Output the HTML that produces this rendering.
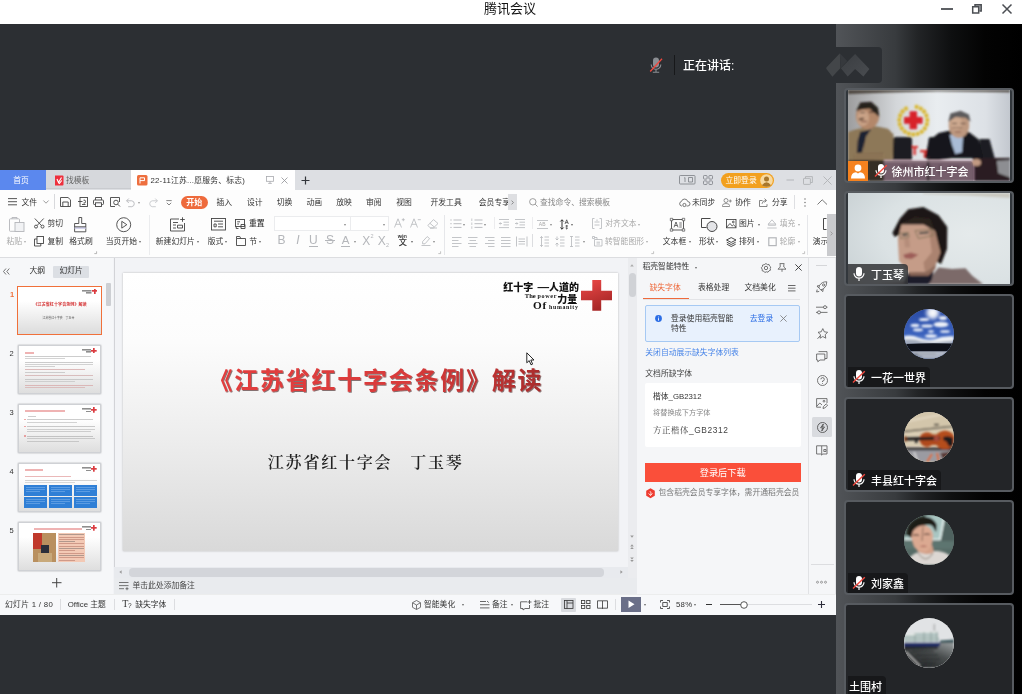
<!DOCTYPE html>
<html lang="zh-CN">
<head>
<meta charset="utf-8">
<title>腾讯会议</title>
<style>
*{box-sizing:border-box;margin:0;padding:0}
html,body{width:1022px;height:694px;overflow:hidden;background:#2c2f33}
body{position:relative;font-family:"Liberation Sans","Noto Sans CJK SC",sans-serif;color:#222;-webkit-font-smoothing:antialiased}
.abs{position:absolute}
#titlebar{will-change:transform;position:absolute;left:0;top:0;width:1022px;height:24px;background:#fff}
#titlebar .t{position:absolute;left:0;width:1022px;top:0;height:24px;line-height:18px;text-align:center;font-size:13px;color:#111;padding-right:2px}
#main{will-change:transform;position:absolute;left:0;top:24px;width:836px;height:670px;background:#2c2f33}
.tile{position:absolute;left:8px;width:170px;height:95px;border:2px solid #575b60;border-radius:4px;background:#232528;overflow:hidden}
.tile.vid{background:#32373c}
.tile .lbl{position:absolute;left:2px;bottom:0;height:20px;background:#17181a;border-radius:0 4px 0 0;color:#fff;font-size:11px;font-weight:500;line-height:22px;padding:0 4px 0 23px;white-space:nowrap}
.tile .av{position:absolute;left:58px;top:13px;width:50px;height:50px;border-radius:50%;overflow:hidden;background:#888}
.host{position:absolute;left:2px;bottom:0;width:20px;height:20px;background:#f5821f}
#side{will-change:transform;position:absolute;left:836px;top:24px;width:186px;height:670px;background:linear-gradient(90deg,#515458 0%,#383b3e 32%,#222426 44%,#0e0f10 62%,#030303 80%,#000 100%)}
#wps{will-change:transform;position:absolute;left:0;top:146px;width:836px;height:445px;background:#eef0f3;overflow:hidden;font-size:8px;color:#333}
.tx{position:absolute;white-space:nowrap;display:block}
.dd{position:absolute;width:0;height:0;border-left:1.7px solid transparent;border-right:1.7px solid transparent;border-top:2.2px solid #666;margin-left:-0.2px}
#wps svg{overflow:visible}
.thumb .tl{position:absolute;right:9px;top:3px;width:9.5px;height:4px;background:linear-gradient(#333,#333) 0 0/9.5px 1.6px no-repeat,linear-gradient(#333,#333) 4px 2.4px/5.5px 1.6px no-repeat}
.thumb .tc{position:absolute;right:3.5px;top:2px;width:5.4px;height:5.4px;background:linear-gradient(#d8262c,#d8262c) center/100% 1.7px no-repeat,linear-gradient(#d8262c,#d8262c) center/1.7px 100% no-repeat}
.thumb i{display:block;opacity:.42}
.thumb .tl{opacity:.55}
.thumb .tc{opacity:.9}
.thumb .tt{position:absolute;white-space:nowrap;line-height:5px;display:block}
.tile .ph{position:absolute;left:2px;top:0;display:block}
.tile svg{display:block}
</style>
</head>
<body>
<div id="titlebar"><div class="t">腾讯会议</div>
<svg class="abs" style="left:930px;top:0" width="92" height="24" viewBox="930 0 92 24" fill="none" stroke="#4b4e53" stroke-width="1.5">
<path d="M941 9H953" stroke-width="1.8"/><path d="M975 6.2V4.8H981.2V11H979.5" fill="#b5b7ba"/><path d="M972.7 6.8H978.7V13H972.7Z" fill="#fff"/><path d="M1002.5 4.5L1011.5 13.5M1011.5 4.5L1002.5 13.5"/></svg>
</div>
<div id="main">
<svg class="abs" style="left:648px;top:30px" width="16" height="20" viewBox="648 54 16 20">
<rect x="653" y="57.5" width="6" height="10" rx="3" fill="#8b8e93"/><path d="M651.2 64.5a4.8 4.8 0 0 0 9.6 0M656 69.5V72M652.8 72.2H659.2" fill="none" stroke="#8b8e93" stroke-width="1.1"/><path d="M650.2 71.5L662 58.8" stroke="#f0483e" stroke-width="1.3"/></svg>
<div class="abs" style="left:674px;top:31px;width:1px;height:20px;background:#17181a"></div>
<div class="abs" style="left:683px;top:33px;font-size:12px;line-height:18px;color:#fff;font-weight:500;white-space:nowrap">正在讲话:</div>

<div id="wps">
<div style="position:absolute;left:0px;top:0px;width:836px;height:20px;background:#dddfe3"></div>
<div style="position:absolute;left:0px;top:0px;width:46px;height:20px;background:#5b88ee"></div>
<span class="tx" style="left:1px;width:40px;text-align:center;top:5px;font-size:7.8px;line-height:12px;color:#fff;font-weight:400;">首页</span>
<div style="position:absolute;left:46px;top:0px;width:85px;height:19px;background:#d6d8dc;border-bottom:1px solid #c9cbcf"></div>
<svg style="position:absolute;left:54px;top:4.5px" width="10" height="11" viewBox="0 0 10 11" fill="none" stroke="#444" stroke-width="0.8" ><path d="M1 0.5H8.5Q9.5 0.5 9.5 1.5V9.5Q9.5 10.5 8.5 10.5H1Z" fill="#ee2f3c" stroke="none"/><path d="M3 4L4.5 7.5L7.5 2.5M5 8.8L7.8 5.5" stroke="#fff" stroke-width="1.1"/></svg>
<span class="tx" style="left:66px;top:5px;font-size:7.8px;line-height:12px;color:#666;font-weight:400;">找模板</span>
<div style="position:absolute;left:131px;top:0px;width:164px;height:20px;background:#fff"></div>
<svg style="position:absolute;left:137px;top:5px" width="10.5" height="10.5" viewBox="0 0 10.5 10.5" fill="none" stroke="#444" stroke-width="0.8" ><rect x="0" y="0" width="10.5" height="10.5" rx="1.5" fill="#ee6f3f" stroke="none"/><path d="M3 8.5V2.8H7.5V5.6H3" stroke="#fff" stroke-width="1"/></svg>
<span class="tx" style="left:150.5px;top:4.8px;font-size:7.8px;line-height:12px;color:#333;font-weight:400;letter-spacing:0.22px">22-11江苏...愿服务、标志)</span>
<svg style="position:absolute;left:266px;top:6px" width="8" height="8" viewBox="0 0 8 8" fill="none" stroke="#a8aaae" stroke-width="0.8" ><rect x="0.5" y="0.5" width="7" height="4.8" /><path d="M4 5.3V7.2M2.2 7.4H5.8"/></svg>
<svg style="position:absolute;left:280.5px;top:6.5px" width="7" height="7" viewBox="0 0 7 7" fill="none" stroke="#8f9196" stroke-width="0.8" ><path d="M0.5 0.5L6.5 6.5M6.5 0.5L0.5 6.5"/></svg>
<svg style="position:absolute;left:301px;top:5.5px" width="9" height="9" viewBox="0 0 9 9" fill="none" stroke="#33363b" stroke-width="1.2" ><path d="M4.5 0.5V8.5M0.5 4.5H8.5"/></svg>
<svg style="position:absolute;left:679px;top:5px" width="17" height="10" viewBox="0 0 17 10" fill="none" stroke="#7b7e84" stroke-width="0.8" ><rect x="0.5" y="0.5" width="15.5" height="8.5" rx="0.8"/><path d="M5.2 3L6 2.6V7M9.5 2.5H13.5V7H9.5Z"/></svg>
<svg style="position:absolute;left:703px;top:5px" width="10" height="10" viewBox="0 0 10 10" fill="none" stroke="#7b7e84" stroke-width="0.8" ><rect x="0.5" y="0.5" width="3.6" height="3.6" rx="0.8"/><rect x="5.9" y="0.5" width="3.6" height="3.6" rx="0.8"/><rect x="0.5" y="5.9" width="3.6" height="3.6" rx="0.8"/><rect x="5.9" y="5.9" width="3.6" height="3.6" rx="0.8"/></svg>
<div style="position:absolute;left:721px;top:2.5px;width:53px;height:15px;background:#f2a01e;border-radius:8px"></div>
<span class="tx" style="left:725.5px;top:4.6px;font-size:7.8px;line-height:12px;color:#fff;font-weight:400;">立即登录</span>
<svg style="position:absolute;left:759.5px;top:3.5px" width="13" height="13" viewBox="0 0 13 13" fill="none" stroke="#444" stroke-width="0.8" ><circle cx="6.5" cy="6.5" r="6.3" fill="#f7d9a0" stroke="none"/><circle cx="6.5" cy="5" r="2.5" fill="#a8772c" stroke="none"/><path d="M2 11.2Q6.5 5.5 11 11.2Q6.5 14.5 2 11.2Z" fill="#a8772c" stroke="none"/></svg>
<svg style="position:absolute;left:786px;top:9px" width="9" height="2" viewBox="0 0 9 2" fill="none" stroke="#b0b2b6" stroke-width="0.9" ><path d="M0.5 1H8"/></svg>
<svg style="position:absolute;left:803px;top:5.5px" width="10" height="9" viewBox="0 0 10 9" fill="none" stroke="#b0b2b6" stroke-width="0.9" ><path d="M2.5 2.2V0.6H9.4V6.5H7.5"/><rect x="0.5" y="2.4" width="6.9" height="6" rx="0.6"/></svg>
<svg style="position:absolute;left:822.5px;top:5.5px" width="9" height="9" viewBox="0 0 9 9" fill="none" stroke="#b0b2b6" stroke-width="0.9" ><path d="M0.5 0.5L8.5 8.5M8.5 0.5L0.5 8.5"/></svg>
<div style="position:absolute;left:0px;top:20px;width:836px;height:67px;background:#fdfdfd"></div>
<div style="position:absolute;left:0px;top:87px;width:836px;height:1px;background:#dcdde0"></div>
<svg style="position:absolute;left:8px;top:28px" width="9" height="7.5" viewBox="0 0 9 7.5" fill="none" stroke="#444" stroke-width="0.9" ><path d="M0 0.6H9M0 3.7H9M0 6.8H9"/></svg>
<span class="tx" style="left:21.5px;top:26.6px;font-size:7.8px;line-height:12px;color:#333;font-weight:400;">文件</span>
<svg style="position:absolute;left:42.5px;top:30px" width="6" height="4" viewBox="0 0 6 4" fill="none" stroke="#777" stroke-width="0.7" ><path d="M0.4 0.5L3 3.2L5.6 0.5"/></svg>
<div style="position:absolute;left:54px;top:24px;width:1px;height:15px;background:#d8d9dc"></div>
<svg style="position:absolute;left:60px;top:27px" width="11" height="10" viewBox="0 0 11 10" fill="none" stroke="#444" stroke-width="0.9" ><path d="M0.5 0.5H8L10.5 2.8V9.5H0.5Z"/><path d="M2.8 9.5V5H8.2V9.5"/></svg>
<svg style="position:absolute;left:77.5px;top:27px" width="10" height="10" viewBox="0 0 10 10" fill="none" stroke="#444" stroke-width="0.9" ><rect x="2" y="0.5" width="7.5" height="9"/><path d="M0 4.5H4.5M5.5 3.2A1.5 1.5 0 1 1 5.5 6M4 7.5H7.5"/></svg>
<svg style="position:absolute;left:92.5px;top:27px" width="11" height="10" viewBox="0 0 11 10" fill="none" stroke="#444" stroke-width="0.9" ><path d="M2.5 3V0.5H8.5V3"/><rect x="0.5" y="3" width="10" height="4.5" rx="0.8"/><rect x="2.5" y="5.8" width="6" height="3.7" fill="#fbfbfc"/></svg>
<svg style="position:absolute;left:109.5px;top:27px" width="10.5" height="10" viewBox="0 0 10.5 10" fill="none" stroke="#444" stroke-width="0.9" ><path d="M9.5 5V0.5H0.5V9.5H5"/><circle cx="6" cy="5.5" r="2.3"/><path d="M7.7 7.2L10 9.5"/></svg>
<svg style="position:absolute;left:125.5px;top:27.5px" width="10" height="9" viewBox="0 0 10 9" fill="none" stroke="#b5b7bb" stroke-width="0.9" ><path d="M0.6 2.8H5.8A3 3 0 0 1 5.8 8.7H2.2M2.8 0.5L0.6 2.8L2.8 5"/></svg>
<i class="dd" style="left:138.3px;top:31.7px;border-top-color:#999"></i>
<svg style="position:absolute;left:147.5px;top:27.5px" width="10" height="9" viewBox="0 0 10 9" fill="none" stroke="#c5c7cb" stroke-width="0.9" ><path d="M9.4 2.8H4.2A3 3 0 0 0 4.2 8.7H7.8M7.2 0.5L9.4 2.8L7.2 5"/></svg>
<svg style="position:absolute;left:165.5px;top:29.5px" width="6" height="6" viewBox="0 0 6 6" fill="none" stroke="#666" stroke-width="0.8" ><path d="M0.3 0.6H5.7M0.8 2.8L3 5L5.2 2.8"/></svg>
<div style="position:absolute;left:181px;top:26px;width:26.5px;height:13px;background:#ee6a3c;border-radius:7px"></div>
<span class="tx" style="left:179.2px;width:30px;text-align:center;top:27px;font-size:8px;line-height:12px;color:#fff;font-weight:700;">开始</span>
<span class="tx" style="left:216.5px;top:26.6px;font-size:7.8px;line-height:12px;color:#333;font-weight:400;">插入</span>
<span class="tx" style="left:247px;top:26.6px;font-size:7.8px;line-height:12px;color:#333;font-weight:400;">设计</span>
<span class="tx" style="left:276.8px;top:26.6px;font-size:7.8px;line-height:12px;color:#333;font-weight:400;">切换</span>
<span class="tx" style="left:306.5px;top:26.6px;font-size:7.8px;line-height:12px;color:#333;font-weight:400;">动画</span>
<span class="tx" style="left:336.3px;top:26.6px;font-size:7.8px;line-height:12px;color:#333;font-weight:400;">放映</span>
<span class="tx" style="left:366px;top:26.6px;font-size:7.8px;line-height:12px;color:#333;font-weight:400;">审阅</span>
<span class="tx" style="left:396.3px;top:26.6px;font-size:7.8px;line-height:12px;color:#333;font-weight:400;">视图</span>
<span class="tx" style="left:430.5px;top:26.6px;font-size:7.8px;line-height:12px;color:#333;font-weight:400;">开发工具</span>
<span class="tx" style="left:478.8px;top:26.6px;font-size:7.8px;line-height:12px;color:#333;font-weight:400;">会员专享</span>
<div style="position:absolute;left:508px;top:24px;width:8.5px;height:15.5px;background:#dedfe2"></div>
<svg style="position:absolute;left:510.5px;top:29.5px" width="3" height="5" viewBox="0 0 3 5" fill="none" stroke="#666" stroke-width="0.7" ><path d="M0.6 0.6L2.4 2.5L0.6 4.4"/></svg>
<svg style="position:absolute;left:529px;top:27.5px" width="9" height="9" viewBox="0 0 9 9" fill="none" stroke="#888" stroke-width="0.8" ><circle cx="3.8" cy="3.8" r="3.2"/><path d="M6.2 6.2L8.6 8.6"/></svg>
<span class="tx" style="left:540px;top:26.6px;font-size:7.8px;line-height:12px;color:#888;font-weight:400;">查找命令、搜索模板</span>
<svg style="position:absolute;left:678.5px;top:27.5px" width="11" height="9" viewBox="0 0 11 9" fill="none" stroke="#555" stroke-width="0.8" ><path d="M3 8H2.6A2.3 2.3 0 0 1 2.4 3.5A3.3 3.3 0 0 1 8.8 3.6A2.2 2.2 0 0 1 8.8 8H7.6"/><circle cx="5.4" cy="7" r="1.6"/></svg>
<span class="tx" style="left:692px;top:26.6px;font-size:7.8px;line-height:12px;color:#333;font-weight:400;">未同步</span>
<svg style="position:absolute;left:722px;top:27.5px" width="10" height="9" viewBox="0 0 10 9" fill="none" stroke="#777" stroke-width="0.8" ><circle cx="4" cy="2.5" r="2"/><path d="M0.5 8.5V7.5Q0.5 5.5 4 5.5Q7.5 5.5 7.5 7.5V8.5ZM8.3 1.5V4.5M6.8 3H9.8"/></svg>
<span class="tx" style="left:735.3px;top:26.6px;font-size:7.8px;line-height:12px;color:#333;font-weight:400;">协作</span>
<svg style="position:absolute;left:759px;top:27.5px" width="10" height="9" viewBox="0 0 10 9" fill="none" stroke="#666" stroke-width="0.8" ><path d="M3.5 2.5H0.5V8.5H8V6.2M3 5.8Q3.5 2.5 7 2.5M5.5 0.6L7.6 2.5L5.5 4.4"/></svg>
<span class="tx" style="left:772px;top:26.6px;font-size:7.8px;line-height:12px;color:#333;font-weight:400;">分享</span>
<div style="position:absolute;left:794px;top:25px;width:1px;height:14px;background:#dedfe2"></div>
<svg style="position:absolute;left:803.5px;top:27.5px" width="2" height="9" viewBox="0 0 2 9" fill="none" stroke="#444" stroke-width="0.8" ><circle cx="1" cy="1" r="0.7" fill="#666" stroke="none"/><circle cx="1" cy="4.5" r="0.7" fill="#666" stroke="none"/><circle cx="1" cy="8" r="0.7" fill="#666" stroke="none"/></svg>
<svg style="position:absolute;left:816.5px;top:29px" width="10.5" height="6" viewBox="0 0 10.5 6" fill="none" stroke="#555" stroke-width="0.8" ><path d="M0.5 5.5L5.2 0.8L10 5.5"/></svg>
<svg style="position:absolute;left:9px;top:47px" width="15.5" height="15" viewBox="0 0 15.5 15" fill="none" stroke="#b4b6ba" stroke-width="0.9" ><rect x="0.5" y="1.8" width="10" height="12.5" rx="0.8"/><path d="M3 1.8V0.5H8V1.8"/><rect x="6" y="5.5" width="9" height="9" fill="#f1f2f4"/></svg>
<span class="tx" style="left:6.5px;top:65.5px;font-size:7.8px;line-height:12px;color:#aaa;font-weight:400;">粘贴</span>
<i class="dd" style="left:24px;top:70.7px;border-top-color:#aaa"></i>
<svg style="position:absolute;left:34px;top:48px" width="10.5" height="10.5" viewBox="0 0 10.5 10.5" fill="none" stroke="#444" stroke-width="0.9" ><path d="M0.8 0.5L7.5 7.6M9.7 0.5L3 7.6"/><circle cx="2" cy="8.6" r="1.5"/><circle cx="8.5" cy="8.6" r="1.5"/></svg>
<span class="tx" style="left:47.5px;top:48px;font-size:7.8px;line-height:12px;color:#333;font-weight:400;">剪切</span>
<svg style="position:absolute;left:34px;top:65.5px" width="10" height="10.5" viewBox="0 0 10 10.5" fill="none" stroke="#444" stroke-width="0.9" ><rect x="3" y="0.5" width="6.5" height="7"/><path d="M3 3H0.5V10H6.8V7.5"/></svg>
<span class="tx" style="left:47.5px;top:65.5px;font-size:7.8px;line-height:12px;color:#333;font-weight:400;">复制</span>
<svg style="position:absolute;left:74px;top:47px" width="12.5" height="15.5" viewBox="0 0 12.5 15.5" fill="none" stroke="#444" stroke-width="0.9" ><path d="M4.8 0.5H7.7V6.5H11.8V14.8H0.6V6.5H4.8Z"/><path d="M0.6 11H11.8" stroke-width="1.6" stroke="#c9c9e8"/><path d="M0.6 9.8H11.8"/></svg>
<span class="tx" style="left:69.3px;top:65.5px;font-size:7.8px;line-height:12px;color:#333;font-weight:400;">格式刷</span>
<svg style="position:absolute;left:93.5px;top:81px" width="3" height="3" viewBox="0 0 3 3" fill="none" stroke="#999" stroke-width="0.7" ><path d="M2.6 0.3V2.6H0.3"/></svg>
<svg style="position:absolute;left:116px;top:47px" width="15.5" height="15.5" viewBox="0 0 15.5 15.5" fill="none" stroke="#444" stroke-width="0.9" ><circle cx="7.7" cy="7.7" r="7"/><path d="M5.8 4.3L10.8 7.7L5.8 11.1Z"/></svg>
<span class="tx" style="left:105.8px;top:65.5px;font-size:7.8px;line-height:12px;color:#333;font-weight:400;">当页开始</span>
<i class="dd" style="left:138.8px;top:70.7px;border-top-color:#666"></i>
<div style="position:absolute;left:149px;top:45px;width:1px;height:40px;background:#ebecee"></div>
<svg style="position:absolute;left:170px;top:47px" width="15.5" height="14.5" viewBox="0 0 15.5 14.5" fill="none" stroke="#444" stroke-width="0.9" ><path d="M9 2H0.5V14H14.5V6"/><path d="M3 5.5H8M3 8H6M3 11H6M7.5 8.2H12.5V11H7.5ZM12.5 0.3V4.8M10.2 2.5H14.8"/></svg>
<span class="tx" style="left:155.8px;top:65.5px;font-size:7.8px;line-height:12px;color:#333;font-weight:400;">新建幻灯片</span>
<i class="dd" style="left:196.8px;top:70.7px;border-top-color:#666"></i>
<svg style="position:absolute;left:210.5px;top:48px" width="15" height="12.5" viewBox="0 0 15 12.5" fill="none" stroke="#444" stroke-width="0.9" ><rect x="0.5" y="0.5" width="14" height="11.5"/><path d="M3 3.2H12M3 6H5.2V8.8H3ZM7 6H12M7 8.8H12"/></svg>
<span class="tx" style="left:207.8px;top:65.5px;font-size:7.8px;line-height:12px;color:#333;font-weight:400;">版式</span>
<i class="dd" style="left:225px;top:70.7px;border-top-color:#666"></i>
<svg style="position:absolute;left:235.3px;top:48.5px" width="10.5" height="10" viewBox="0 0 10.5 10" fill="none" stroke="#444" stroke-width="0.9" ><rect x="0.5" y="0.5" width="9" height="7"/><path d="M2.2 2.8H5M2.2 5H4M6 5.5H10V9.5H6ZM3.5 9.5H1.2V8"/></svg>
<span class="tx" style="left:249px;top:48px;font-size:7.8px;line-height:12px;color:#333;font-weight:500;">重置</span>
<svg style="position:absolute;left:235.8px;top:65.5px" width="10" height="10" viewBox="0 0 10 10" fill="none" stroke="#444" stroke-width="0.9" ><path d="M0.5 2.5H9.5V9.5H0.5ZM0.5 2.5V0.5H3.8L4.8 2.5"/></svg>
<span class="tx" style="left:249.3px;top:65.5px;font-size:7.8px;line-height:12px;color:#333;font-weight:400;">节</span>
<i class="dd" style="left:258.8px;top:70.7px;border-top-color:#666"></i>
<div style="position:absolute;left:273.5px;top:45.5px;width:77px;height:15px;background:#fff;border:1px solid #ebecee;border-right:none"></div>
<div style="position:absolute;left:350px;top:45.5px;width:39px;height:15px;background:#fff;border:1px solid #ebecee"></div>
<i class="dd" style="left:344px;top:53.7px;border-top-color:#888"></i>
<i class="dd" style="left:383.5px;top:53.7px;border-top-color:#888"></i>
<svg style="position:absolute;left:394px;top:48px" width="11.5" height="10" viewBox="0 0 11.5 10" fill="none" stroke="#b4b6ba" stroke-width="0.8" ><path d="M0.5 9.5L4 0.8L7.5 9.5M1.8 6.3H6.2M9.3 0.2V3.2M7.8 1.7H10.8"/></svg>
<svg style="position:absolute;left:409.5px;top:48px" width="11.5" height="10" viewBox="0 0 11.5 10" fill="none" stroke="#b4b6ba" stroke-width="0.8" ><path d="M0.5 9.5L4 0.8L7.5 9.5M1.8 6.3H6.2M7.8 1.7H10.8"/></svg>
<svg style="position:absolute;left:426.5px;top:48.5px" width="11.5" height="10" viewBox="0 0 11.5 10" fill="none" stroke="#b4b6ba" stroke-width="0.8" ><path d="M6.5 0.6L11 4.5L6.3 9H3.5L0.8 6.5ZM2.8 4.2L7.3 8M3 9H10"/></svg>
<span class="tx" style="left:277.6px;top:64.3px;font-size:12px;line-height:12px;color:#b4b6ba;font-weight:400;">B</span>
<span class="tx" style="left:296.3px;top:64.3px;font-size:12px;line-height:12px;color:#b4b6ba;font-weight:400;font-style:italic">I</span>
<span class="tx" style="left:309px;top:64.3px;font-size:12px;line-height:12px;color:#b4b6ba;font-weight:400;">U</span>
<div style="position:absolute;left:309px;top:76px;width:8.6px;height:0.8px;background:#b4b6ba"></div>
<span class="tx" style="left:326px;top:64.3px;font-size:12px;line-height:12px;color:#b4b6ba;font-weight:400;">S</span>
<div style="position:absolute;left:325.2px;top:70.2px;width:9.4px;height:0.8px;background:#b4b6ba"></div>
<span class="tx" style="left:341.7px;top:64px;font-size:11.5px;line-height:12px;color:#b4b6ba;font-weight:400;">A</span>
<div style="position:absolute;left:341.3px;top:75.8px;width:9px;height:1px;background:#b4b6ba"></div>
<i class="dd" style="left:353.8px;top:70.7px;border-top-color:#888"></i>
<span class="tx" style="left:362.3px;top:64.6px;font-size:12px;line-height:12px;color:#b4b6ba;font-weight:400;">X</span>
<span class="tx" style="left:370.6px;top:63.3px;font-size:5.5px;line-height:6px;color:#b4b6ba;font-weight:400;">2</span>
<span class="tx" style="left:377.8px;top:64.6px;font-size:12px;line-height:12px;color:#b4b6ba;font-weight:400;">X</span>
<span class="tx" style="left:386px;top:71.5px;font-size:5.5px;line-height:6px;color:#b4b6ba;font-weight:400;">2</span>
<span class="tx" style="left:398.7px;top:68px;font-size:8.2px;line-height:10px;color:#333;font-weight:500;">文</span>
<span class="tx" style="left:397.8px;top:63.7px;font-size:4.6px;line-height:5px;color:#333;font-weight:700;">wén</span>
<i class="dd" style="left:411.3px;top:70.7px;border-top-color:#666"></i>
<svg style="position:absolute;left:420.5px;top:66px" width="10" height="10" viewBox="0 0 10 10" fill="none" stroke="#b4b6ba" stroke-width="0.8" ><path d="M6.2 0.6L8.6 2.6L4 7.8L1.6 7.8L1.6 5.6ZM0.5 9.5H9.5"/></svg>
<i class="dd" style="left:432.8px;top:70.7px;border-top-color:#888"></i>
<svg style="position:absolute;left:438px;top:81px" width="3" height="3" viewBox="0 0 3 3" fill="none" stroke="#aaa" stroke-width="0.7" ><path d="M2.6 0.3V2.6H0.3"/></svg>
<div style="position:absolute;left:444px;top:45px;width:1px;height:40px;background:#e6e7ea"></div>
<svg style="position:absolute;left:449.5px;top:49px" width="11.5" height="9.5" viewBox="0 0 11.5 9.5" fill="none" stroke="#b4b6ba" stroke-width="0.9" ><path d="M3.5 1H11.5M3.5 4.7H11.5M3.5 8.4H11.5"/><path d="M0.3 1H1.7M0.3 4.7H1.7M0.3 8.4H1.7"/></svg>
<i class="dd" style="left:462.8px;top:53.7px;border-top-color:#888"></i>
<svg style="position:absolute;left:471px;top:48px" width="11.5" height="11" viewBox="0 0 11.5 11" fill="none" stroke="#b4b6ba" stroke-width="0.9" ><path d="M3.5 2H11.5M3.5 5.7H11.5M3.5 9.4H11.5"/><path d="M0.8 0.5V3M0.8 4.5V7M0.8 8.3V10.8" stroke-width="0.7"/></svg>
<i class="dd" style="left:484.3px;top:53.7px;border-top-color:#888"></i>
<div style="position:absolute;left:493.8px;top:47px;width:1px;height:12px;background:#ececee"></div>
<svg style="position:absolute;left:499px;top:49px" width="10" height="9.5" viewBox="0 0 10 9.5" fill="none" stroke="#b4b6ba" stroke-width="0.8" ><path d="M0 0.5H10M4.5 3.2H10M4.5 5.9H10M0 8.6H10M3 4.5H0.3M1.5 3.3L0.3 4.5L1.5 5.7"/></svg>
<svg style="position:absolute;left:515.3px;top:49px" width="10" height="9.5" viewBox="0 0 10 9.5" fill="none" stroke="#b4b6ba" stroke-width="0.8" ><path d="M0 0.5H10M4.5 3.2H10M4.5 5.9H10M0 8.6H10M0 4.5H2.8M1.6 3.3L2.8 4.5L1.6 5.7"/></svg>
<div style="position:absolute;left:531.8px;top:47px;width:1px;height:12px;background:#ececee"></div>
<svg style="position:absolute;left:537px;top:49.5px" width="11" height="9" viewBox="0 0 11 9" fill="none" stroke="#b4b6ba" stroke-width="0.8" ><path d="M0 0.5H11M0 8.5H11"/></svg>
<span class="tx" style="left:538.8px;top:51.3px;font-size:5px;line-height:6px;color:#aaa;font-weight:400;">AB</span>
<i class="dd" style="left:550px;top:53.7px;border-top-color:#888"></i>
<svg style="position:absolute;left:559.5px;top:48.5px" width="9" height="11" viewBox="0 0 9 11" fill="none" stroke="#333" stroke-width="0.9" ><path d="M2 0.8V10.2M0.3 2.5L2 0.8L3.7 2.5M0.3 8.5L2 10.2L3.7 8.5" stroke-width="1"/><path d="M5 5L6.7 0.8L8.4 5M5.6 3.6H7.8M5.5 7H8M6.7 6V10M5.6 9L6.7 10L7.8 9" stroke-width="0.7"/></svg>
<i class="dd" style="left:571.5px;top:53.7px;border-top-color:#666"></i>
<svg style="position:absolute;left:451.5px;top:66.5px" width="9.5" height="10" viewBox="0 0 9.5 10" fill="none" stroke="#b4b6ba" stroke-width="0.8" ><path d="M0 0.5H9.5M0 3.5H6.5M0 6.5H9.5M0 9.5H6.5"/></svg>
<svg style="position:absolute;left:468px;top:66.5px" width="9.5" height="10" viewBox="0 0 9.5 10" fill="none" stroke="#b4b6ba" stroke-width="0.8" ><path d="M0 0.5H9.5M1.5 3.5H8M0 6.5H9.5M1.5 9.5H8"/></svg>
<svg style="position:absolute;left:484.5px;top:66.5px" width="9.5" height="10" viewBox="0 0 9.5 10" fill="none" stroke="#b4b6ba" stroke-width="0.8" ><path d="M0 0.5H9.5M3 3.5H9.5M0 6.5H9.5M3 9.5H9.5"/></svg>
<svg style="position:absolute;left:501px;top:66.5px" width="9.5" height="10" viewBox="0 0 9.5 10" fill="none" stroke="#b4b6ba" stroke-width="0.8" ><path d="M0 0.5H9.5M0 3.5H9.5M0 6.5H9.5M0 9.5H9.5"/></svg>
<svg style="position:absolute;left:515.5px;top:66px" width="11.5" height="11" viewBox="0 0 11.5 11" fill="none" stroke="#b4b6ba" stroke-width="0.8" ><path d="M0.5 0.5V10.5M11 0.5V10.5M2.5 3H9M2.5 5.5H9M2.5 8H9"/></svg>
<div style="position:absolute;left:532.2px;top:64px;width:1px;height:13px;background:#dcdde0"></div>
<svg style="position:absolute;left:539.5px;top:66px" width="9" height="11" viewBox="0 0 9 11" fill="none" stroke="#b4b6ba" stroke-width="0.8" ><path d="M1.5 0.5V10.5M0.2 2L1.5 0.5L2.8 2M0.2 9L1.5 10.5L2.8 9M4.5 1H9M4.5 4H9M4.5 7H9M4.5 10H9"/></svg>
<svg style="position:absolute;left:555.3px;top:66px" width="9.5" height="11" viewBox="0 0 9.5 11" fill="none" stroke="#b4b6ba" stroke-width="0.8" ><path d="M2 0.5V4M0.5 2.5L2 4L3.5 2.5M2 10.5V7M0.5 8.5L2 7L3.5 8.5M5 1H9.5M5 4H9.5M5 7H9.5M5 10H9.5"/></svg>
<svg style="position:absolute;left:570.3px;top:66px" width="9.5" height="11" viewBox="0 0 9.5 11" fill="none" stroke="#b4b6ba" stroke-width="0.8" ><path d="M1.5 0.5V10.5M0 0.5H3M0 10.5H3M5 1H9.5M5 4H9.5M5 7H9.5M5 10H9.5"/></svg>
<i class="dd" style="left:582.8px;top:70.7px;border-top-color:#888"></i>
<svg style="position:absolute;left:592px;top:48px" width="10" height="11" viewBox="0 0 10 11" fill="none" stroke="#b4b6ba" stroke-width="0.8" ><path d="M2.5 0.5H0.5V10.5H2.5M7.5 0.5H9.5V10.5H7.5M2.5 4H7.5M2.5 7H7.5M5 1.5V3"/></svg>
<span class="tx" style="left:605.3px;top:48px;font-size:7.8px;line-height:12px;color:#aaa;font-weight:400;">对齐文本</span>
<i class="dd" style="left:638.5px;top:53.7px;border-top-color:#aaa"></i>
<svg style="position:absolute;left:592px;top:66px" width="10.5" height="10.5" viewBox="0 0 10.5 10.5" fill="none" stroke="#b4b6ba" stroke-width="0.8" ><path d="M2.5 2.5V0.5H0.5V2.5ZM2.5 1.5H5V3.5M2.5 3.5H10V10H2.5ZM4.5 6.2H8M4.5 8H8"/></svg>
<span class="tx" style="left:605px;top:65.5px;font-size:7.8px;line-height:12px;color:#aaa;font-weight:400;">转智能图形</span>
<i class="dd" style="left:646.5px;top:70.7px;border-top-color:#aaa"></i>
<svg style="position:absolute;left:651px;top:81px" width="3" height="3" viewBox="0 0 3 3" fill="none" stroke="#aaa" stroke-width="0.7" ><path d="M2.6 0.3V2.6H0.3"/></svg>
<svg style="position:absolute;left:669.5px;top:48px" width="15" height="13.5" viewBox="0 0 15 13.5" fill="none" stroke="#333" stroke-width="0.8" ><rect x="1.5" y="1.5" width="12" height="10.5"/><path d="M0.3 0.3H2.7V2.7H0.3ZM12.3 0.3H14.7V2.7H12.3ZM0.3 10.8H2.7V13.2H0.3ZM12.3 10.8H14.7V13.2H12.3Z" fill="#fbfbfc" stroke-width="0.6"/><path d="M4 9.3L6 4L8 9.3M4.8 7.5H7.2M9.3 5H11.8M9.3 7H11.8M9.3 9H11.8" stroke-width="0.7"/></svg>
<span class="tx" style="left:662.8px;top:65.5px;font-size:7.8px;line-height:12px;color:#333;font-weight:400;">文本框</span>
<i class="dd" style="left:688.8px;top:70.7px;border-top-color:#666"></i>
<svg style="position:absolute;left:700.5px;top:48px" width="16.5" height="14" viewBox="0 0 16.5 14" fill="none" stroke="#333" stroke-width="0.9" ><path d="M9.5 0.5H0.5V9.5H5.5"/><circle cx="11" cy="8.5" r="5" fill="#e4e5e8"/></svg>
<span class="tx" style="left:699px;top:65.5px;font-size:7.8px;line-height:12px;color:#333;font-weight:400;">形状</span>
<i class="dd" style="left:716.5px;top:70.7px;border-top-color:#666"></i>
<svg style="position:absolute;left:726.3px;top:49px" width="10.5" height="9.5" viewBox="0 0 10.5 9.5" fill="none" stroke="#333" stroke-width="0.8" ><rect x="0.5" y="0.5" width="9.5" height="8.3"/><path d="M0.8 8L4 4.5L6.2 7L7.5 5.8L10 8.2"/><circle cx="7.3" cy="3" r="0.9"/></svg>
<span class="tx" style="left:739px;top:48px;font-size:7.8px;line-height:12px;color:#333;font-weight:400;">图片</span>
<i class="dd" style="left:757.8px;top:53.7px;border-top-color:#666"></i>
<svg style="position:absolute;left:726.3px;top:66.5px" width="10.5" height="10" viewBox="0 0 10.5 10" fill="none" stroke="#333" stroke-width="0.9" ><path d="M5.2 0.6L10 3L5.2 5.4L0.5 3ZM0.8 5.2L5.2 7.5L9.7 5.2M0.8 7.2L5.2 9.5L9.7 7.2"/></svg>
<span class="tx" style="left:739px;top:65.5px;font-size:7.8px;line-height:12px;color:#333;font-weight:400;">排列</span>
<i class="dd" style="left:757.3px;top:70.7px;border-top-color:#666"></i>
<svg style="position:absolute;left:767px;top:49px" width="10" height="10" viewBox="0 0 10 10" fill="none" stroke="#b4b6ba" stroke-width="0.8" ><path d="M5 0.8L8.6 5H1.4ZM1.4 5V6.3H8.6V5M0.3 9H9.7" /></svg>
<span class="tx" style="left:779.8px;top:48px;font-size:7.8px;line-height:12px;color:#aaa;font-weight:400;">填充</span>
<i class="dd" style="left:797.8px;top:53.7px;border-top-color:#aaa"></i>
<svg style="position:absolute;left:767.5px;top:66.5px" width="9" height="9.5" viewBox="0 0 9 9.5" fill="none" stroke="#b4b6ba" stroke-width="0.8" ><rect x="0.8" y="0.8" width="7.4" height="7.8" stroke-width="1.2"/></svg>
<span class="tx" style="left:779.8px;top:65.5px;font-size:7.8px;line-height:12px;color:#aaa;font-weight:400;">轮廓</span>
<i class="dd" style="left:797.8px;top:70.7px;border-top-color:#aaa"></i>
<svg style="position:absolute;left:801.5px;top:81px" width="3" height="3" viewBox="0 0 3 3" fill="none" stroke="#aaa" stroke-width="0.7" ><path d="M2.6 0.3V2.6H0.3"/></svg>
<div style="position:absolute;left:807px;top:45px;width:1px;height:40px;background:#e6e7ea"></div>
<svg style="position:absolute;left:823px;top:48px" width="4" height="12" viewBox="0 0 4 12" fill="none" stroke="#333" stroke-width="0.9" ><path d="M3.5 0.5H0.5V11.5H3.5"/></svg>
<span class="tx" style="left:812.8px;top:65.5px;font-size:7.8px;line-height:12px;color:#333;font-weight:400;width:14.5px;overflow:hidden">演示</span>
<div style="position:absolute;left:827.3px;top:43.5px;width:8.7px;height:42px;background:#c9cacd"></div>
<svg style="position:absolute;left:830px;top:61px" width="3" height="5" viewBox="0 0 3 5" fill="none" stroke="#888" stroke-width="0.7" ><path d="M0.6 0.6L2.4 2.5L0.6 4.4"/></svg>
<div style="position:absolute;left:0px;top:88px;width:836px;height:336px;background:#f2f3f6"></div>
<div style="position:absolute;left:0px;top:88px;width:113px;height:336px;background:#f6f7f9"></div>
<div style="position:absolute;left:113.5px;top:88px;width:1px;height:336px;background:#d2d3d7"></div>
<svg style="position:absolute;left:3px;top:97.5px" width="7" height="7" viewBox="0 0 7 7" fill="none" stroke="#555" stroke-width="0.8" ><path d="M3 0.5L0.5 3.5L3 6.5M6.3 0.5L3.8 3.5L6.3 6.5"/></svg>
<span class="tx" style="left:29.5px;top:95.3px;font-size:7.8px;line-height:12px;color:#333;font-weight:400;">大纲</span>
<div style="position:absolute;left:52.5px;top:95.5px;width:36.5px;height:12px;background:#dcdfe4;border-radius:1px"></div>
<span class="tx" style="left:59.5px;top:95.3px;font-size:7.8px;line-height:12px;color:#333;font-weight:400;">幻灯片</span>
<div style="position:absolute;left:106px;top:113px;width:5px;height:23px;background:#cdcfd3;border-radius:1px"></div>
<div class="thumb" style="position:absolute;left:17px;top:115.5px;width:84.8px;height:49.5px;background:linear-gradient(180deg,#fff 30%,#dcdcdc);border:1.5px solid #f0703a;overflow:hidden"><i class="tl"></i><i class="tc"></i><b class="tt" style="left:15.5px;top:15.5px;color:#d9494a;font-size:4.1px;font-weight:900">《江苏省红十字会条例》解读</b><b class="tt" style="left:24.5px;top:29.8px;color:#555;font-size:2.9px;font-weight:400">江苏省红十字会　丁玉琴</b></div>
<span class="tx" style="left:10px;top:118.5px;font-size:7.5px;line-height:12px;color:#f0703a;font-weight:700;">1</span>
<div class="thumb" style="position:absolute;left:18px;top:175px;width:83.3px;height:48.5px;background:linear-gradient(180deg,#fff 30%,#dedede);border:1px solid #cfd1d5;box-shadow:0 0 1.5px rgba(0,0,0,.35);overflow:hidden"><i class="tl"></i><i class="tc"></i><i style="position:absolute;left:6px;top:6px;width:9px;height:1.8px;background:#d9494a"></i><i style="position:absolute;left:6px;top:10px;width:66px;height:1px;background:#888"></i><i style="position:absolute;left:6px;top:12px;width:40px;height:1px;background:#999"></i><i style="position:absolute;left:6px;top:15.5px;width:68px;height:1px;background:#888"></i><i style="position:absolute;left:6px;top:17.5px;width:68px;height:1px;background:#999"></i><i style="position:absolute;left:6px;top:19.5px;width:30px;height:1px;background:#999"></i><i style="position:absolute;left:6px;top:23px;width:60px;height:1px;background:#b66"></i><i style="position:absolute;left:6px;top:26px;width:40px;height:1px;background:#999"></i><i style="position:absolute;left:6px;top:29px;width:68px;height:1px;background:#b77"></i><i style="position:absolute;left:6px;top:32.5px;width:68px;height:1px;background:#999"></i><i style="position:absolute;left:6px;top:34.5px;width:50px;height:1px;background:#aaa"></i><i style="position:absolute;left:6px;top:38.5px;width:68px;height:1px;background:#c77"></i><i style="position:absolute;left:6px;top:40.5px;width:60px;height:1px;background:#c88"></i></div>
<span class="tx" style="left:9.5px;top:178px;font-size:7.5px;line-height:12px;color:#333;font-weight:400;">2</span>
<div class="thumb" style="position:absolute;left:18px;top:234.2px;width:83.3px;height:48.5px;background:linear-gradient(180deg,#fff 30%,#dedede);border:1px solid #cfd1d5;box-shadow:0 0 1.5px rgba(0,0,0,.35);overflow:hidden"><i class="tl"></i><i class="tc"></i><i style="position:absolute;left:6px;top:5px;width:40px;height:1.8px;background:#d9494a"></i><i style="position:absolute;left:9px;top:10.5px;width:8px;height:1px;background:#888"></i><i style="position:absolute;left:8px;top:14px;width:66px;height:1px;background:#888"></i><i style="position:absolute;left:8px;top:16.5px;width:50px;height:1px;background:#999"></i><i style="position:absolute;left:8px;top:21px;width:68px;height:1px;background:#888"></i><i style="position:absolute;left:8px;top:23.5px;width:68px;height:1px;background:#999"></i><i style="position:absolute;left:8px;top:26px;width:64px;height:1px;background:#999"></i><i style="position:absolute;left:8px;top:30.5px;width:66px;height:1px;background:#888"></i><i style="position:absolute;left:8px;top:33px;width:68px;height:1px;background:#999"></i><i style="position:absolute;left:8px;top:35.5px;width:52px;height:1px;background:#999"></i><i style="position:absolute;left:5px;top:13.7px;width:1.6px;height:1.6px;background:#d33"></i><i style="position:absolute;left:5px;top:20.7px;width:1.6px;height:1.6px;background:#d33"></i><i style="position:absolute;left:5px;top:30.2px;width:1.6px;height:1.6px;background:#d33"></i></div>
<span class="tx" style="left:9.5px;top:237.2px;font-size:7.5px;line-height:12px;color:#333;font-weight:400;">3</span>
<div class="thumb" style="position:absolute;left:18px;top:293.3px;width:83.3px;height:48.5px;background:linear-gradient(180deg,#fff 30%,#dedede);border:1px solid #cfd1d5;box-shadow:0 0 1.5px rgba(0,0,0,.35);overflow:hidden"><i class="tl"></i><i class="tc"></i><i style="position:absolute;left:6px;top:5px;width:18px;height:1.8px;background:#d9494a"></i><i style="position:absolute;left:6px;top:12px;width:46px;height:1.2px;background:#c55"></i><i style="position:absolute;left:6px;top:15.5px;width:72px;height:1px;background:#999"></i><i style="position:absolute;left:6px;top:17.5px;width:50px;height:1px;background:#aaa"></i><i style="position:absolute;left:4.5px;top:21px;width:23.5px;height:10.5px;background:#2f7fd6;opacity:1"></i><i style="position:absolute;left:6.5px;top:23px;width:19px;height:0.8px;background:#9cc6f2"></i><i style="position:absolute;left:6.5px;top:25px;width:19px;height:0.8px;background:#9cc6f2"></i><i style="position:absolute;left:6.5px;top:27px;width:14px;height:0.8px;background:#9cc6f2"></i><i style="position:absolute;left:29.5px;top:21px;width:23.5px;height:10.5px;background:#2f7fd6;opacity:1"></i><i style="position:absolute;left:31.5px;top:23px;width:19px;height:0.8px;background:#9cc6f2"></i><i style="position:absolute;left:31.5px;top:25px;width:19px;height:0.8px;background:#9cc6f2"></i><i style="position:absolute;left:31.5px;top:27px;width:14px;height:0.8px;background:#9cc6f2"></i><i style="position:absolute;left:54.5px;top:21px;width:23.5px;height:10.5px;background:#2f7fd6;opacity:1"></i><i style="position:absolute;left:56.5px;top:23px;width:19px;height:0.8px;background:#9cc6f2"></i><i style="position:absolute;left:56.5px;top:25px;width:19px;height:0.8px;background:#9cc6f2"></i><i style="position:absolute;left:56.5px;top:27px;width:14px;height:0.8px;background:#9cc6f2"></i><i style="position:absolute;left:4.5px;top:33px;width:23.5px;height:10.5px;background:#2f7fd6;opacity:1"></i><i style="position:absolute;left:6.5px;top:35px;width:19px;height:0.8px;background:#9cc6f2"></i><i style="position:absolute;left:6.5px;top:37px;width:19px;height:0.8px;background:#9cc6f2"></i><i style="position:absolute;left:6.5px;top:39px;width:14px;height:0.8px;background:#9cc6f2"></i><i style="position:absolute;left:29.5px;top:33px;width:23.5px;height:10.5px;background:#2f7fd6;opacity:1"></i><i style="position:absolute;left:31.5px;top:35px;width:19px;height:0.8px;background:#9cc6f2"></i><i style="position:absolute;left:31.5px;top:37px;width:19px;height:0.8px;background:#9cc6f2"></i><i style="position:absolute;left:31.5px;top:39px;width:14px;height:0.8px;background:#9cc6f2"></i><i style="position:absolute;left:54.5px;top:33px;width:23.5px;height:10.5px;background:#2f7fd6;opacity:1"></i><i style="position:absolute;left:56.5px;top:35px;width:19px;height:0.8px;background:#9cc6f2"></i><i style="position:absolute;left:56.5px;top:37px;width:19px;height:0.8px;background:#9cc6f2"></i><i style="position:absolute;left:56.5px;top:39px;width:14px;height:0.8px;background:#9cc6f2"></i></div>
<span class="tx" style="left:9.5px;top:296.3px;font-size:7.5px;line-height:12px;color:#333;font-weight:400;">4</span>
<div class="thumb" style="position:absolute;left:18px;top:352.3px;width:83.3px;height:48.5px;background:linear-gradient(180deg,#fff 30%,#dedede);border:1px solid #cfd1d5;box-shadow:0 0 1.5px rgba(0,0,0,.35);overflow:hidden"><i class="tl"></i><i class="tc"></i><i style="position:absolute;left:15px;top:5px;width:48px;height:1.8px;background:#d9494a"></i><i style="position:absolute;left:14px;top:10px;width:23px;height:29px;background:#b9905f;opacity:1"></i><i style="position:absolute;left:14px;top:10px;width:9px;height:16px;background:#c0392b;opacity:1"></i><i style="position:absolute;left:22px;top:22px;width:8px;height:9px;background:#2b2f3a;opacity:1"></i><i style="position:absolute;left:19px;top:30px;width:14px;height:9px;background:#c8a97a;opacity:1"></i><i style="position:absolute;left:39px;top:10px;width:27px;height:29px;background:#f3c9b5;opacity:1"></i><i style="position:absolute;left:40px;top:11px;width:25px;height:0.9px;background:#555"></i><i style="position:absolute;left:40px;top:13.3px;width:25px;height:0.9px;background:#a0584a"></i><i style="position:absolute;left:40px;top:15.6px;width:25px;height:0.9px;background:#a0584a"></i><i style="position:absolute;left:40px;top:17.9px;width:16px;height:0.9px;background:#555"></i><i style="position:absolute;left:40px;top:20.2px;width:25px;height:0.9px;background:#a0584a"></i><i style="position:absolute;left:40px;top:22.5px;width:25px;height:0.9px;background:#a0584a"></i><i style="position:absolute;left:40px;top:24.8px;width:25px;height:0.9px;background:#555"></i><i style="position:absolute;left:40px;top:27.1px;width:16px;height:0.9px;background:#a0584a"></i><i style="position:absolute;left:40px;top:29.4px;width:25px;height:0.9px;background:#a0584a"></i><i style="position:absolute;left:40px;top:31.7px;width:25px;height:0.9px;background:#555"></i><i style="position:absolute;left:40px;top:34px;width:25px;height:0.9px;background:#a0584a"></i><i style="position:absolute;left:40px;top:36.3px;width:16px;height:0.9px;background:#a0584a"></i></div>
<span class="tx" style="left:9.5px;top:355.3px;font-size:7.5px;line-height:12px;color:#333;font-weight:400;">5</span>
<svg style="position:absolute;left:51.5px;top:408px" width="9.5" height="9.5" viewBox="0 0 9.5 9.5" fill="none" stroke="#444" stroke-width="1" ><path d="M4.7 0V9.5M0 4.7H9.5"/></svg>
<div style="position:absolute;left:627.5px;top:88px;width:9.5px;height:320px;background:#ebecef"></div>
<div style="position:absolute;left:628.5px;top:103px;width:7px;height:23.5px;background:#d0d2d6;border-radius:3.5px"></div>
<svg style="position:absolute;left:630px;top:93.5px" width="4" height="3" viewBox="0 0 4 3" fill="none" stroke="#444" stroke-width="0.8" ><path d="M2 0.3L3.8 2.6H0.2Z" fill="#aaa" stroke="none"/></svg>
<svg style="position:absolute;left:630px;top:364.5px" width="4" height="3" viewBox="0 0 4 3" fill="none" stroke="#444" stroke-width="0.8" ><path d="M2 2.7L3.8 0.4H0.2Z" fill="#999" stroke="none"/></svg>
<svg style="position:absolute;left:630px;top:374px" width="4" height="5.5" viewBox="0 0 4 5.5" fill="none" stroke="#444" stroke-width="0.8" ><path d="M2 0.3L3.8 2.4H0.2ZM2 2.9L3.8 5H0.2Z" fill="#999" stroke="none"/></svg>
<svg style="position:absolute;left:630px;top:386.5px" width="4" height="5.5" viewBox="0 0 4 5.5" fill="none" stroke="#444" stroke-width="0.8" ><path d="M2 2.5L3.8 0.4H0.2ZM2 5.1L3.8 3H0.2Z" fill="#999" stroke="none"/></svg>
<div style="position:absolute;left:114px;top:397px;width:514px;height:11px;background:#e8eaee"></div>
<div style="position:absolute;left:128.5px;top:398px;width:475px;height:8.5px;background:#d3d5da;border-radius:4px"></div>
<svg style="position:absolute;left:119px;top:400px" width="3" height="4" viewBox="0 0 3 4" fill="none" stroke="#444" stroke-width="0.8" ><path d="M2.6 0.2V3.8L0.3 2Z" fill="#999" stroke="none"/></svg>
<svg style="position:absolute;left:619.5px;top:400px" width="3" height="4" viewBox="0 0 3 4" fill="none" stroke="#444" stroke-width="0.8" ><path d="M0.4 0.2V3.8L2.7 2Z" fill="#999" stroke="none"/></svg>
<div style="position:absolute;left:114px;top:408px;width:523px;height:16px;background:#e9ebee"></div>
<svg style="position:absolute;left:118.5px;top:411.5px" width="9.5" height="8" viewBox="0 0 9.5 8" fill="none" stroke="#555" stroke-width="0.8" ><path d="M0 0.5H9.5M0 3.6H9.5M0 6.7H5M6.5 6.7H9.5M8 5.2V8.2"/></svg>
<span class="tx" style="left:132.5px;top:409.7px;font-size:7.8px;line-height:12px;color:#444;font-weight:400;">单击此处添加备注</span>
<div class="slide" style="position:absolute;left:123.4px;top:103px;width:495px;height:277.6px;background:linear-gradient(180deg,#ffffff 0%,#fcfcfc 25%,#ececec 62%,#d9d9d9 100%);box-shadow:0 0 2px rgba(0,0,0,.25)"><svg width="496" height="278" viewBox="123 273 496 278" style="position:absolute;left:0;top:0">
<defs><linearGradient id="tg" x1="0" x2="1" y1="0" y2="0"><stop offset="0" stop-color="#e43e3e"/><stop offset="0.6" stop-color="#d83a3a"/><stop offset="1" stop-color="#a92c2c"/></linearGradient>
<linearGradient id="cg" x1="0" x2="0.4" y1="0" y2="1"><stop offset="0" stop-color="#ee4a48"/><stop offset="1" stop-color="#a82727"/></linearGradient>
<filter id="ts" x="-5%" y="-20%" width="110%" height="150%"><feDropShadow dx="0.9" dy="0.9" stdDeviation="0.5" flood-color="#3a1010" flood-opacity="0.65"/></filter></defs>
<path d="M592.3 280H601.2V290.8H612V300.2H601.2V310.8H592.3V300.2H581V290.8H592.3Z" fill="url(#cg)"/>
<text x="208.5" y="389" font-family="'Liberation Sans','Noto Sans CJK SC',sans-serif" font-weight="700" font-size="24" letter-spacing="1.75" fill="url(#tg)" filter="url(#ts)">《江苏省红十字会条例》解读</text>
<text x="267.8" y="468" font-family="'Liberation Serif','Noto Serif CJK SC',serif" font-weight="600" font-size="16" letter-spacing="1.8" fill="#222">江苏省红十字会　丁玉琴</text>
<text x="503.3" y="290.8" font-family="'Liberation Sans','Noto Sans CJK SC',sans-serif" font-weight="900" font-size="10" fill="#111">红十字</text>
<text x="537.4" y="290.8" font-family="'Liberation Sans','Noto Sans CJK SC',sans-serif" font-weight="900" font-size="11.6" fill="#111">—</text>
<text x="549" y="290.8" font-family="'Liberation Sans','Noto Sans CJK SC',sans-serif" font-weight="900" font-size="10" fill="#111">人道的</text>
<text x="557.3" y="303" font-family="'Liberation Sans','Noto Sans CJK SC',sans-serif" font-weight="900" font-size="10" fill="#111">力量</text>
<text x="524.8" y="298" font-family="'Liberation Serif',serif" font-weight="700" font-size="6.6" fill="#111">The <tspan font-size="6" letter-spacing="0.75">power</tspan></text>
<text x="533" y="308.7" font-family="'Liberation Serif',serif" font-weight="700" font-size="11.2" letter-spacing="0.7" fill="#111">Of</text>
<text x="549" y="309" font-family="'Liberation Serif',serif" font-weight="700" font-size="5.8" letter-spacing="0.72" fill="#111">humanity</text>
</svg></div>
<svg style="position:absolute;left:526.3px;top:181.5px" width="9" height="14" viewBox="0 0 9 14" fill="none" stroke="#444" stroke-width="0.8" ><path d="M0.8 0.8V10.8L3.2 8.6L5 12.8L6.6 12.1L4.8 8H8Z" fill="#fff" stroke="#111" stroke-width="0.9"/></svg>
<div style="position:absolute;left:637px;top:88px;width:171px;height:336px;background:#f5f6f8"></div>
<div style="position:absolute;left:807.5px;top:88px;width:1px;height:336px;background:#e1e2e5"></div>
<div style="position:absolute;left:808.5px;top:88px;width:27.5px;height:336px;background:#f5f6f8"></div>
<span class="tx" style="left:642.5px;top:91.3px;font-size:7.8px;line-height:12px;color:#333;font-weight:400;">稻壳智能特性</span>
<i class="dd" style="left:695px;top:96.7px;border-top-color:#666"></i>
<svg style="position:absolute;left:761px;top:92.5px" width="10" height="10" viewBox="0 0 10 10" fill="none" stroke="#555" stroke-width="0.8" ><path d="M5 0.5L6.3 1.6L8 1.4L8.5 3L9.8 4L9.2 5.5L9.5 7.2L8 7.8L7 9.2L5.4 8.8L3.8 9.5L2.8 8.2L1.2 7.8L1.2 6.2L0.3 4.8L1.4 3.6L1.6 2L3.2 1.7Z"/><circle cx="5" cy="5" r="1.7"/></svg>
<svg style="position:absolute;left:777px;top:93px" width="10" height="9" viewBox="0 0 10 9" fill="none" stroke="#555" stroke-width="0.8" ><path d="M2.8 0.6H7.2L6.8 1.8V4L9 6.2H1L3.2 4V1.8ZM5 6.2V8.8"/></svg>
<svg style="position:absolute;left:795px;top:94px" width="7" height="7" viewBox="0 0 7 7" fill="none" stroke="#333" stroke-width="0.9" ><path d="M0.4 0.4L6.6 6.6M6.6 0.4L0.4 6.6"/></svg>
<span class="tx" style="left:649.5px;top:112px;font-size:7.8px;line-height:12px;color:#ee6a3c;font-weight:400;">缺失字体</span>
<span class="tx" style="left:698px;top:112px;font-size:7.8px;line-height:12px;color:#333;font-weight:400;">表格处理</span>
<span class="tx" style="left:744.5px;top:112px;font-size:7.8px;line-height:12px;color:#333;font-weight:400;">文档美化</span>
<svg style="position:absolute;left:788px;top:115px" width="7.5" height="6.5" viewBox="0 0 7.5 6.5" fill="none" stroke="#444" stroke-width="0.8" ><path d="M0 0.5H7.5M0 3.2H7.5M0 5.9H7.5"/></svg>
<div style="position:absolute;left:642.5px;top:128.6px;width:157px;height:0.8px;background:#e3e4e7"></div>
<div style="position:absolute;left:642.5px;top:127.8px;width:46.5px;height:1.4px;background:#ee6a3c"></div>
<div style="position:absolute;left:645px;top:135px;width:154.5px;height:37px;background:#e8f1fd;border:1px solid #a6c9f3;border-radius:2px"></div>
<svg style="position:absolute;left:655px;top:145px" width="7" height="7" viewBox="0 0 7 7" fill="none" stroke="#444" stroke-width="0.8" ><circle cx="3.5" cy="3.5" r="3.4" fill="#2b6de5" stroke="none"/><path d="M3.5 1.6V2.4M3.5 3.2V5.6" stroke="#fff" stroke-width="0.9"/></svg>
<span class="tx" style="left:671px;top:142.5px;font-size:7.8px;line-height:12px;color:#333;font-weight:400;">登录使用稻壳智能</span>
<span class="tx" style="left:671px;top:153.3px;font-size:7.8px;line-height:12px;color:#333;font-weight:400;">特性</span>
<span class="tx" style="left:749.8px;top:142.5px;font-size:7.8px;line-height:12px;color:#2b6de5;font-weight:400;">去登录</span>
<svg style="position:absolute;left:780px;top:145px" width="7" height="7" viewBox="0 0 7 7" fill="none" stroke="#777" stroke-width="0.8" ><path d="M0.4 0.4L6.6 6.6M6.6 0.4L0.4 6.6"/></svg>
<span class="tx" style="left:645.3px;top:177px;font-size:7.8px;line-height:12px;color:#4a86e8;font-weight:400;">关闭自动展示缺失字体列表</span>
<span class="tx" style="left:645.3px;top:197.5px;font-size:7.8px;line-height:12px;color:#444;font-weight:400;">文档所缺字体</span>
<div style="position:absolute;left:644.5px;top:213px;width:156.5px;height:63.5px;background:#fff;border-radius:2px"></div>
<span class="tx" style="left:653px;top:221px;font-size:7.8px;line-height:12px;color:#333;font-weight:400;">楷体_GB2312</span>
<span class="tx" style="left:653px;top:237.3px;font-size:7.2px;line-height:12px;color:#888;font-weight:400;">将替换成下方字体</span>
<span class="tx" style="left:653px;top:254px;font-size:8.4px;line-height:12px;color:#444;font-weight:400;font-family:'Liberation Sans','Noto Serif CJK SC',serif;letter-spacing:0.6px">方正楷体_GB2312</span>
<div style="position:absolute;left:645px;top:293px;width:155.5px;height:19px;background:#fa4f3a"></div>
<span class="tx" style="left:672.7px;width:100px;text-align:center;top:296.7px;font-size:9.2px;line-height:12px;color:#fff;font-weight:400;">登录后下载</span>
<svg style="position:absolute;left:646px;top:318px" width="9" height="10.5" viewBox="0 0 9 10.5" fill="none" stroke="#444" stroke-width="0.8" ><path d="M4.5 0.3L8.8 2.7V7.8L4.5 10.2L0.2 7.8V2.7Z" fill="#ee3c30" stroke="none"/><path d="M4 3.2Q5.8 4.6 4.6 7.2M2.6 5.4L4.5 7.6L6.4 5.4" stroke="#fff" stroke-width="0.8" fill="none"/></svg>
<span class="tx" style="left:658.5px;top:317.3px;font-size:7.8px;line-height:12px;color:#777;font-weight:400;letter-spacing:0.03px">包含稻壳会员专享字体，需开通稻壳会员</span>
<div style="position:absolute;left:816px;top:94.6px;width:11px;height:0.9px;background:#d5d6d9"></div>
<svg style="position:absolute;left:816px;top:110.5px" width="11.5" height="11.5" viewBox="0 0 11.5 11.5" fill="none" stroke="#555" stroke-width="0.8" ><path d="M10.8 0.8Q6 0.5 3.5 4.5L2.8 7L4.8 8.8L7.2 8Q11 5.5 10.8 0.8ZM3.5 4.5L1 5L2.8 7M7.2 8L6.8 10.6L4.8 8.8M1.2 8.5L0.6 11L3.2 10.4"/><circle cx="7.6" cy="4" r="1.1"/></svg>
<svg style="position:absolute;left:816px;top:134.5px" width="11.5" height="9.5" viewBox="0 0 11.5 9.5" fill="none" stroke="#555" stroke-width="0.8" ><path d="M0 2.2H7.5M10.5 2.2H11.5M0 7.4H1.5M4.5 7.4H11.5"/><circle cx="9" cy="2.2" r="1.5"/><circle cx="3" cy="7.4" r="1.5"/></svg>
<svg style="position:absolute;left:816.5px;top:157.5px" width="11" height="11.5" viewBox="0 0 11 11.5" fill="none" stroke="#555" stroke-width="0.8" ><path d="M5.8 0.6L7.3 3.8L10.6 4.3L8.2 6.7L8.8 10.2L5.8 8.5L3 10.2L3.5 6.7M0.5 10.8L3.2 7.8"/><path d="M5.8 0.6L4.2 3.8L1 4.3L3.5 6.7"/></svg>
<svg style="position:absolute;left:816px;top:181px" width="11.5" height="11" viewBox="0 0 11.5 11" fill="none" stroke="#555" stroke-width="0.8" ><path d="M2.5 0.6H11V7.5H9M0.6 3H8.8V9H4L1.8 10.8V9H0.6Z"/></svg>
<svg style="position:absolute;left:816.5px;top:204.5px" width="11" height="11" viewBox="0 0 11 11" fill="none" stroke="#555" stroke-width="0.8" ><circle cx="5.5" cy="5.5" r="5"/><path d="M3.9 4.3A1.7 1.7 0 1 1 5.5 6V7M5.5 8V8.8"/></svg>
<svg style="position:absolute;left:816px;top:228px" width="12" height="11" viewBox="0 0 12 11" fill="none" stroke="#555" stroke-width="0.8" ><path d="M11 5V0.6H0.6V9.2H5"/><path d="M1 8L3.8 5L6 7"/><circle cx="8" cy="3.2" r="0.9"/><path d="M7 10.5L7.4 8.6L10.2 5.8L11.6 7.2L8.8 10Z"/></svg>
<div style="position:absolute;left:811.8px;top:246.7px;width:20.4px;height:20.3px;background:#d9dbdf;border-radius:1.5px"></div>
<svg style="position:absolute;left:816.5px;top:251.5px" width="11" height="11" viewBox="0 0 11 11" fill="none" stroke="#444" stroke-width="0.8" ><circle cx="5.5" cy="5.5" r="5"/><path d="M6.3 2L3.6 5.8H5.6L4.8 9L7.5 5H5.5Z"/></svg>
<svg style="position:absolute;left:816px;top:275px" width="11.5" height="10.5" viewBox="0 0 11.5 10.5" fill="none" stroke="#555" stroke-width="0.8" ><path d="M0.6 0.8H5.7V10L4.6 9H0.6ZM5.7 0.8H11V9H6.8L5.7 10M7.8 4.5H10V6.5H7.8Z"/></svg>
<div style="position:absolute;left:810.5px;top:394.3px;width:23px;height:0.8px;background:#dcdde0"></div>
<svg style="position:absolute;left:816px;top:410.5px" width="11" height="2.5" viewBox="0 0 11 2.5" fill="none" stroke="#666" stroke-width="0.6" ><circle cx="1.5" cy="1.2" r="1"/><circle cx="5.5" cy="1.2" r="1"/><circle cx="9.5" cy="1.2" r="1"/></svg>
<div style="position:absolute;left:0px;top:423.5px;width:836px;height:21.5px;background:#f7f8fa;border-top:1px solid #eceded"></div>
<span class="tx" style="left:5px;top:428.5px;font-size:7.8px;line-height:12px;color:#333;font-weight:400;letter-spacing:0.3px">幻灯片 1 / 80</span>
<div style="position:absolute;left:60px;top:428.5px;width:1px;height:11px;background:#dcdde0"></div>
<span class="tx" style="left:67.8px;top:428.5px;font-size:7.8px;line-height:12px;color:#333;font-weight:400;">Office 主题</span>
<div style="position:absolute;left:113.7px;top:428.5px;width:1px;height:11px;background:#dcdde0"></div>
<span class="tx" style="left:122.3px;top:428.3px;font-size:10px;line-height:12px;color:#333;font-weight:400;font-family:'Liberation Serif',serif">T</span>
<span class="tx" style="left:128px;top:431.5px;font-size:6.5px;line-height:8px;color:#333;font-weight:400;">?</span>
<span class="tx" style="left:135.2px;top:428.5px;font-size:7.8px;line-height:12px;color:#333;font-weight:400;">缺失字体</span>
<div style="position:absolute;left:173.8px;top:428.5px;width:1px;height:11px;background:#dcdde0"></div>
<svg style="position:absolute;left:411.5px;top:429.5px" width="9" height="10" viewBox="0 0 9 10" fill="none" stroke="#555" stroke-width="0.8" ><path d="M4.5 0.5L8.5 2.7V7.3L4.5 9.5L0.5 7.3V2.7ZM0.7 2.8L4.5 5L8.3 2.8M4.5 5V9.3"/></svg>
<span class="tx" style="left:424px;top:428.5px;font-size:7.8px;line-height:12px;color:#333;font-weight:400;">智能美化</span>
<i class="dd" style="left:462px;top:434px;border-top-color:#666"></i>
<svg style="position:absolute;left:480px;top:430.5px" width="9.5" height="8" viewBox="0 0 9.5 8" fill="none" stroke="#444" stroke-width="0.8" ><path d="M0 0.5H6M0 3.7H9.5M0 6.9H9.5M7 0L8.8 1.6"/></svg>
<span class="tx" style="left:492px;top:428.5px;font-size:7.8px;line-height:12px;color:#333;font-weight:400;">备注</span>
<i class="dd" style="left:511px;top:434px;border-top-color:#666"></i>
<svg style="position:absolute;left:519.5px;top:429.5px" width="11.5" height="10" viewBox="0 0 11.5 10" fill="none" stroke="#444" stroke-width="0.8" ><path d="M7 1.8H0.6V8.5H3V10L5 8.5H9.5V5M9.5 0V4M7.5 2H11.5"/></svg>
<span class="tx" style="left:533.5px;top:428.5px;font-size:7.8px;line-height:12px;color:#333;font-weight:400;">批注</span>
<div style="position:absolute;left:560.5px;top:427.5px;width:15.5px;height:14px;background:#d9dbdf;border-radius:1px"></div>
<svg style="position:absolute;left:563.5px;top:430px" width="9.5" height="9" viewBox="0 0 9.5 9" fill="none" stroke="#333" stroke-width="0.8" ><rect x="0.5" y="0.5" width="8.5" height="8"/><path d="M3 0.5V8.5M3 3H9"/></svg>
<svg style="position:absolute;left:581px;top:430px" width="9.5" height="9" viewBox="0 0 9.5 9" fill="none" stroke="#333" stroke-width="0.8" ><rect x="0.5" y="0.5" width="3.3" height="3.1"/><rect x="5.7" y="0.5" width="3.3" height="3.1"/><rect x="0.5" y="5.4" width="3.3" height="3.1"/><rect x="5.7" y="5.4" width="3.3" height="3.1"/></svg>
<svg style="position:absolute;left:596.5px;top:430px" width="11" height="9" viewBox="0 0 11 9" fill="none" stroke="#333" stroke-width="0.8" ><path d="M0.5 0.8H5.5V8.2H0.5ZM5.5 0.8H10.5V8.2H5.5M5.5 8.2V9"/></svg>
<div style="position:absolute;left:614.5px;top:428.5px;width:1px;height:11px;background:#dcdde0"></div>
<div style="position:absolute;left:620.5px;top:427px;width:20px;height:14.5px;background:#6a6f88"></div>
<svg style="position:absolute;left:627.5px;top:430px" width="7" height="8.5" viewBox="0 0 7 8.5" fill="none" stroke="#444" stroke-width="0.8" ><path d="M0.5 0.5L6.5 4.2L0.5 8Z" fill="#fff" stroke="none"/></svg>
<i class="dd" style="left:644px;top:434px;border-top-color:#666"></i>
<svg style="position:absolute;left:660px;top:430px" width="10" height="9" viewBox="0 0 10 9" fill="none" stroke="#333" stroke-width="0.8" ><path d="M0.5 2.5V0.5H3M7 0.5H9.5V2.5M9.5 6.5V8.5H7M3 8.5H0.5V6.5"/><rect x="2.8" y="2.6" width="4.4" height="3.8"/></svg>
<span class="tx" style="left:676px;top:428.5px;font-size:7.8px;line-height:12px;color:#333;font-weight:400;letter-spacing:0.25px">58%</span>
<i class="dd" style="left:694.3px;top:434px;border-top-color:#666"></i>
<div style="position:absolute;left:705.5px;top:434px;width:6.5px;height:1px;background:#333"></div>
<div style="position:absolute;left:720px;top:434.2px;width:92px;height:0.7px;background:#dddee1"></div>
<div style="position:absolute;left:720px;top:434.1px;width:24px;height:0.9px;background:#555"></div>
<svg style="position:absolute;left:740px;top:430.5px" width="8" height="8" viewBox="0 0 8 8" fill="none" stroke="#444" stroke-width="0.9" ><circle cx="4" cy="4" r="3.3" fill="#fff"/></svg>
<svg style="position:absolute;left:817.8px;top:431px" width="7" height="7" viewBox="0 0 7 7" fill="none" stroke="#2c2c3a" stroke-width="1.1" ><path d="M3.5 0V7M0 3.5H7"/></svg>
<div style="position:absolute;left:834.5px;top:88px;width:1.5px;height:336px;background:#e4e5e8"></div>

</div>
</div>
<div id="side">
<div class="abs" style="left:-12px;top:23px;width:58px;height:36px;background:#2c2f33;border-radius:0 4px 4px 0"></div>
<svg class="abs" style="left:-12px;top:23px" width="58" height="36" viewBox="824 47 58 36"><defs><linearGradient id="lg1" x1="0" y1="0" x2="1" y2="1"><stop offset="0" stop-color="#3a3d41"/><stop offset="1" stop-color="#494c50"/></linearGradient></defs>
<path d="M839.9 53.3L826.6 67.2Q825.8 68.3 826.6 69.3L832.4 76.8L840.3 68.2Z" fill="#434649"/>
<path d="M839.9 53.3L847.3 61L840.6 68.2Z" fill="#36393d"/>
<path d="M855.1 54L840.9 68.2L847.7 76.6L855.1 69.1L863.4 76.6L869.4 69Z" fill="url(#lg1)"/></svg>
<div class="tile vid" style="top:64px" id="t1"><svg class="ph" width="162" height="91" viewBox="0 0 162 91">
<defs><linearGradient id="w1" x1="0" x2="1"><stop offset="0" stop-color="#9d9d9e"/><stop offset="0.3" stop-color="#d4d7da"/><stop offset="0.55" stop-color="#e9edf0"/><stop offset="0.85" stop-color="#dde1e6"/><stop offset="1" stop-color="#c3c8cf"/></linearGradient>
<filter id="b1" x="-5%" y="-5%" width="110%" height="110%"><feGaussianBlur stdDeviation="0.85"/></filter>
<pattern id="tw" width="3" height="3" patternUnits="userSpaceOnUse"><rect width="3" height="3" fill="#8d7758"/><rect width="1.5" height="1.5" fill="#a8906c"/><rect x="1.5" y="1.5" width="1.5" height="1.5" fill="#6f5c42"/></pattern></defs>
<rect width="162" height="91" fill="url(#w1)"/>
<g filter="url(#b1)">
<path d="M0 0H162V2.2L90 1.2L40 2.6L0 4Z" fill="#4e463f"/>
<circle cx="65.3" cy="30.5" r="14" fill="none" stroke="#d9b62e" stroke-width="3.8" stroke-dasharray="3.6 0.9 3.6 0.9 3.6 0.9 3.6 0.9 3.6 0.9 3.6 0.9 3.6 0.9 3.6 0.9 3.6 0.9 3.6 0.9 3.6 0.9 3.6 0.9 3.6 0.9 3.6 0.9 3.6 0.9 3.6 0.9 3.6 0.9 3.6 11" transform="rotate(-84 65.3 30.5)"/>
<path d="M61.6 24V21.5H69V27.2H74.6V34H69V39.5H61.6V34H56V27.2H61.6Z" fill="#d8242b" transform="translate(0,-0.3)"/>
<path d="M63 56H70V58H67.8V65H65.5V58H63ZM72 60H82V62.2H78V68H75.8V62.2H72Z" fill="#d8302f"/>
<rect x="45" y="47" width="19" height="26" rx="2.5" fill="#1b1c20"/>
<rect x="80.5" y="47" width="12" height="24" rx="2.5" fill="#1d1e22"/>
<path d="M131.5 49H141.5L147.5 71L140 74H131.5Z" fill="#1d1e22"/>
<path d="M0.0,42.1 L9.8,38.7 L27.4,36.2 L40.1,38.7 L45.5,44.6 L44.8,69.9 L36.7,72.4 L35.9,90.9 L0.0,90.9Z" fill="url(#tw)"/>
<path d="M12.3,42.1 L23.2,39.2 L18.2,46.3 L14.0,63.1 L8.9,63.1 L9.8,49.7Z" fill="#1b2032"/>
<path d="M6.4,64.0 L14.8,62.3 L35.9,63.1 L36.4,69.0 L16.5,70.7 L6.4,69.9Z" fill="#8b7355"/>
<ellipse cx="19.5" cy="26" rx="11.6" ry="13.2" fill="#b3876a"/><ellipse cx="15" cy="28" rx="6" ry="8" fill="#c9a286"/><path d="M12 22.5H17M21 22H26" stroke="#3a2a22" stroke-width="1.1"/><path d="M13 31.5H19" stroke="#7a4a3e" stroke-width="1.2"/>
<path d="M8.1,21.0 L12.3,12.6 L23.2,11.8 L30.0,17.7 L31.3,26.9 L28.3,24.4 L21.5,18.5 L13.1,19.4Z" fill="#27201c"/>
<path d="M10.6,28.6 L15.7,27.4 L15.8,29.5 L11.1,30.5Z" fill="#5e4535"/>
<path d="M77.1,68.2 L80.5,51.3 L90.6,42.9 L104.0,39.9 L120.9,42.1 L131.0,49.7 L136.0,69.9 L125.9,70.7 L124.2,68.2 L104.0,68.2 L90.6,69.9Z" fill="#17181c"/>
<path d="M101.5,44.6 L115.0,46.3 L114.1,62.3 L107.4,64.0 L104.0,54.7Z" fill="#a9bcd6"/>
<ellipse cx="111" cy="35" rx="10.3" ry="13" fill="#bd987f"/><ellipse cx="108" cy="33" rx="6" ry="7" fill="#cda98f"/><path d="M104 33.5H109M112.5 33.5H117.5" stroke="#4a3830" stroke-width="1"/><path d="M107 42H113" stroke="#8a5a4e" stroke-width="1"/>
<path d="M100.3,32.0 L102.4,23.6 L112.5,20.7 L120.9,24.4 L122.6,32.0 L117.5,27.8 L107.4,26.9Z" fill="#5b5a5b"/>
<path d="M104.0,37.0 L114.1,37.0 L114.1,38.2 L104.0,38.2Z" fill="#7a5c4c" opacity=".7"/>
<rect x="126" y="68" width="36" height="23" fill="#2a1f21"/>
<path d="M148.7,70.7 L162.1,69.9 L162.1,87.5 L150.3,83.3Z" fill="#8d8e92"/>
<rect x="35.8" y="70" width="90.5" height="21" fill="#896d7d"/><path d="M52 76H60M66 75V84M74 77H84M92 75V85M100 77H112" stroke="#4a3540" stroke-width="2" opacity=".55"/><rect x="79" y="66" width="2.2" height="25" fill="#2a2226"/>
<rect x="35.8" y="70" width="90.5" height="1.6" fill="#c9adb8"/>
<ellipse cx="128.5" cy="72.5" rx="4.5" ry="3.6" fill="#c19a82"/>
<rect x="0" y="70" width="36" height="21" fill="#3a3128"/>
</g></svg><div class="host"><svg width="20" height="20" viewBox="0 0 20 20"><circle cx="10" cy="7" r="3.4" fill="#fff"/><path d="M3 17.5Q3 11.6 8 11.2L10 12.6L12 11.2Q17 11.6 17 17.5Z" fill="#fff"/></svg></div><div class="lbl" style="left:23.5px;background:rgba(30,25,30,.18);padding-left:22px"><svg class="abs" style="left:4px;top:2px" width="14" height="16" viewBox="0 0 14 16"><rect x="4" y="1" width="6" height="9.5" rx="3" fill="#fff"/><path d="M2 7.2a5 5 0 0 0 10 0M7 12.2V15" fill="none" stroke="#fff" stroke-width="1.2"/><path d="M1 13.6L12.8 2.2" stroke="#f0483e" stroke-width="1.4"/></svg>徐州市红十字会</div></div>
<div class="tile vid" style="top:167px" id="t2"><svg class="ph" width="162" height="91" viewBox="0 0 162 91">
<defs><radialGradient id="w2" cx="0.75" cy="0.45" r="0.9"><stop offset="0" stop-color="#e5eaeb"/><stop offset="0.6" stop-color="#dbe2e4"/><stop offset="1" stop-color="#c9d1d4"/></radialGradient>
<filter id="b2" x="-5%" y="-5%" width="110%" height="110%"><feGaussianBlur stdDeviation="0.85"/></filter></defs>
<rect width="162" height="91" fill="url(#w2)"/>
<g filter="url(#b2)">
<path d="M75 0H162V5L120 2.6L75 1Z" fill="#c9c8bf"/>
<path d="M26.6,91.2 L51.9,89.6 L83.8,82.8 L90.6,74.4 L104.0,76.1 L117.5,75.3 L124.2,82.8 L135.2,91.2Z" fill="#7c6a69"/>
<path d="M55.2,91.2 L60.3,79.5 L85.5,77.8 L83.8,87.0 L80.5,91.2Z" fill="#1b1b2a"/>
<path d="M46.8,44.1 L44.3,39.9 L51.9,25.6 L60.3,16.3 L75.4,14.1 L90.6,22.2 L99.3,34.0 L99.0,55.9 L93.1,71.0 L87.2,67.7 L77.1,29.0Z" fill="#1e1916"/>
<path d="M49.8,45.8 L53.5,31.5 L67.0,24.7 L80.5,26.4 L87.2,39.1 L92.3,59.3 L88.0,71.0 L77.1,79.5 L60.3,79.1 L51.0,67.7Z" fill="#c59c88"/>
<path d="M80.5,34.0 L87.2,39.1 L92.3,59.3 L88.0,71.0 L77.1,79.5 L75.4,69.4 L83.8,59.3Z" fill="#ab8370"/>
<path d="M60.3,79.1 L77.1,79.5 L88.0,71.0 L87.2,76.1 L80.5,82.8 L62.0,82.8Z" fill="#8f6a5a"/>
<path d="M56.1,45.8 L61.1,45.1 L62.3,54.2 L56.9,54.5Z" fill="#b58d7a"/>
<path d="M53.5,31.5 L67.0,23.9 L82.2,25.6 L86.4,37.4 L75.4,31.5 L63.6,31.5Z" fill="#2a211d"/>
<path d="M55.2,61.8 L62.8,59.6 L70.4,61.8 L63.6,66.0 L56.9,65.2Z" fill="#9d5d58"/>
<path d="M51.0,40.4 L60.3,39.4 L61.1,44.1 L52.7,45.5Z M67.0,37.7 L83.8,36.5 L85.5,42.4 L70.4,45.5Z" fill="none" stroke="#7d6f55" stroke-width="0.9"/>
<path d="M54.4,42.1 L59.4,41.4 M71.2,40.4 L80.5,39.4" stroke="#2b3a3a" stroke-width="1.6"/>
</g></svg><div class="lbl" style="background:rgba(52,54,56,.86)"><svg class="abs" style="left:4px;top:2px" width="14" height="16" viewBox="0 0 14 16"><rect x="4" y="1" width="6" height="9.5" rx="3" fill="#fff"/><path d="M2 7.2a5 5 0 0 0 10 0M7 12.2V15" fill="none" stroke="#fff" stroke-width="1.2"/></svg>丁玉琴</div></div>
<div class="tile" style="top:270px"><div class="av" id="a3"><svg width="50" height="50" viewBox="0 0 50 50"><defs><linearGradient id="s3" x1="0" x2="0" y1="0" y2="1"><stop offset="0" stop-color="#2a4ba4"/><stop offset="0.5" stop-color="#3b62bd"/><stop offset="0.7" stop-color="#6f8fd2"/></linearGradient><filter id="b3"><feGaussianBlur stdDeviation="0.85"/></filter><radialGradient id="sun"><stop offset="0" stop-color="#fff"/><stop offset="0.45" stop-color="#fff" stop-opacity=".85"/><stop offset="1" stop-color="#cfdcff" stop-opacity="0"/></radialGradient></defs>
<rect width="50" height="50" fill="url(#s3)"/><g filter="url(#b3)"><circle cx="28.7" cy="3.8" r="9" fill="url(#sun)"/>
<g fill="#fff" opacity=".9"><ellipse cx="20" cy="10.5" rx="5" ry="1.5"/><ellipse cx="39" cy="9" rx="4" ry="2"/><ellipse cx="11" cy="16.5" rx="4.5" ry="1.7"/><ellipse cx="23" cy="17" rx="6" ry="1.6"/><ellipse cx="37" cy="15.5" rx="7.5" ry="2.8"/><ellipse cx="14" cy="21" rx="5" ry="1.4"/><ellipse cx="27" cy="22.5" rx="3" ry="1.3"/><ellipse cx="41" cy="22.5" rx="5" ry="1.3"/><ellipse cx="27" cy="27" rx="6" ry="1.7"/></g>
<path d="M0 27Q8 25.5 14 28.5Q22 32 30 30.5Q40 26.5 50 27.5V36H0Z" fill="#eef1f6"/><path d="M0 30.5Q10 29.5 18 32.5L30 33.5L50 31.5V36H0Z" fill="#a3acbd"/></g>
<rect y="42" width="50" height="9" fill="#8b94a6"/><g filter="url(#b3)"><path d="M8 43.2H45M14 45.5H40M18 48H36" stroke="#e3e8f0" stroke-width="1.1"/><path d="M10 44.6H32" stroke="#2f3646" stroke-width=".8"/></g>
<path d="M0 35Q25 33.6 50 34.6V42.2H0Z" fill="#0d1019"/></svg></div><div class="lbl"><svg class="abs" style="left:4px;top:2px" width="14" height="16" viewBox="0 0 14 16"><rect x="4" y="1" width="6" height="9.5" rx="3" fill="#fff"/><path d="M2 7.2a5 5 0 0 0 10 0M7 12.2V15" fill="none" stroke="#fff" stroke-width="1.2"/><path d="M1 13.6L12.8 2.2" stroke="#f0483e" stroke-width="1.4"/></svg>一花一世界</div></div>
<div class="tile" style="top:373px"><div class="av" id="a4"><svg width="50" height="50" viewBox="0 0 50 50"><defs><filter id="b4"><feGaussianBlur stdDeviation="0.85"/></filter></defs><rect width="50" height="50" fill="#d9cdb4"/><g filter="url(#b4)">
<path d="M0 0H50V14L0 19Z" fill="#d3c6ab"/><path d="M0 19.3L50 14.2" stroke="#3a342c" stroke-width="1.2"/><path d="M0 10L40 2" stroke="#e6dcc6" stroke-width="1.5"/><rect x="30" y="11.8" width="5" height="1.6" fill="#3a3630"/>
<path d="M0 37.5H50V50H0Z" fill="#9b9ba2"/><path d="M0 37H50" stroke="#1d1d20" stroke-width="2.6"/><path d="M28 42L23 50M33 41L35 50" stroke="#e0671c" stroke-width="1.8"/><path d="M10 40L14 50" stroke="#ddd" stroke-width="1.5"/><path d="M36 41L50 39V50H40Z" fill="#5a3a34"/>
<ellipse cx="23" cy="27.6" rx="7.4" ry="7.4" fill="#b04a1c"/><ellipse cx="41" cy="28" rx="10" ry="9.6" fill="#b54d1d"/><rect x="26" y="22.5" width="9" height="10.5" fill="#b04a1c"/>
<path d="M0 25.6L36 24.6V28L0 28.6Z" fill="#1f1c1c"/><rect x="30" y="24" width="5" height="5" fill="#a34a3a"/><path d="M39 25Q45 23 49 26L49 33Q46 36 44 33Q43 29 39 28Z" fill="#1f1a1a"/><rect x="0" y="24.5" width="2.5" height="5" fill="#7a3a1c"/><rect x="11" y="28" width="2.5" height="3" fill="#222"/></g></svg></div><div class="lbl"><svg class="abs" style="left:4px;top:2px" width="14" height="16" viewBox="0 0 14 16"><rect x="4" y="1" width="6" height="9.5" rx="3" fill="#fff"/><path d="M2 7.2a5 5 0 0 0 10 0M7 12.2V15" fill="none" stroke="#fff" stroke-width="1.2"/><path d="M1 13.6L12.8 2.2" stroke="#f0483e" stroke-width="1.4"/></svg>丰县红十字会</div></div>
<div class="tile" style="top:476px"><div class="av" id="a5"><svg width="50" height="50" viewBox="0 0 50 50"><defs><filter id="b5"><feGaussianBlur stdDeviation="0.9"/></filter></defs><rect width="50" height="50" fill="#566b66"/><g filter="url(#b5)">
<path d="M22 0H42L37 25H0V21H20Z" fill="#a9c6c2"/><path d="M40 3L36 24.5H0" fill="none" stroke="#eaf4f2" stroke-width="1.6"/><path d="M42 0H50V30H36Z" fill="#4f625f"/><path d="M0 26H50V34H0Z" fill="#5d7570"/>
<path d="M4 44Q10 37 20 36H34Q42 37 46 41L40 50H10Z" fill="#dcd7d3"/><path d="M14 38Q22 50 29 38" fill="none" stroke="#6a5a4a" stroke-width=".7"/>
<path d="M13 36L14 30H28L30 37Q22 42 13 36Z" fill="#d3a088"/>
<path d="M7 22Q6 11 16 10Q27 9 29 20Q29 32 22 37Q14 38 10 31Z" fill="#dba991"/>
<path d="M3 20Q2 8 14 3Q26 -1 32 8Q34 12 31 14Q28 9 22 10Q13 10 9 16L7 23Z" fill="#1f1a18"/><path d="M28 8Q34 10 32 17L29 12Z" fill="#1f1a18"/>
<path d="M9 20.5Q12 19 15 20.5M20 19.5Q23 18.5 26 19.5" stroke="#3a2a24" stroke-width="1.1" fill="none"/><path d="M16.5 31.5Q19.5 30.5 22.5 31.5" stroke="#b56a5e" stroke-width="1.2"/><path d="M19 12L18 26" stroke="#3a2a24" stroke-width=".5"/></g></svg></div><div class="lbl"><svg class="abs" style="left:4px;top:2px" width="14" height="16" viewBox="0 0 14 16"><rect x="4" y="1" width="6" height="9.5" rx="3" fill="#fff"/><path d="M2 7.2a5 5 0 0 0 10 0M7 12.2V15" fill="none" stroke="#fff" stroke-width="1.2"/><path d="M1 13.6L12.8 2.2" stroke="#f0483e" stroke-width="1.4"/></svg>刘家鑫</div></div>
<div class="tile" style="top:579px"><div class="av" id="a6"><svg width="50" height="50" viewBox="0 0 50 50"><defs><filter id="b6"><feGaussianBlur stdDeviation="0.85"/></filter><linearGradient id="wt" x1="1" y1="0" x2="0.2" y2="1"><stop offset="0" stop-color="#9a9fa0"/><stop offset="0.45" stop-color="#4a4e4f"/><stop offset="1" stop-color="#1f2223"/></linearGradient></defs><rect width="50" height="50" fill="#e1e3e5"/><g filter="url(#b6)">
<rect y="25" width="50" height="25" fill="url(#wt)"/><path d="M36 22.6L50 21.6V25H36Z" fill="#3f5a5e"/>
<path d="M0 17L12 14.5L26 13.4H34L35 24H0Z" fill="#dfe5e2"/><path d="M0 18.5H34M0 20.5H35M0 22.5H35M12 16.2H34" stroke="#5f8a8a" stroke-width=".9"/><path d="M11 15V24M20 14V24M27 13.5V24M33 13.5V24" stroke="#7a8a86" stroke-width=".6"/>
<path d="M0 24H36.5L35.5 28.4H0Z" fill="#1d2c66"/><path d="M0 24.3H36" stroke="#dfe5ea" stroke-width=".7"/><path d="M30.3 6V13.4" stroke="#777" stroke-width=".7"/>
<path d="M0 28.4H34V31H0Z" fill="#1a1d22" opacity=".8"/><path d="M2 34L16 48" stroke="#e4e4e4" stroke-width="1"/><path d="M8 33H30M12 37H34M18 41H36M20 45H32" stroke="#1c1e20" stroke-width="1.2" opacity=".7"/></g></svg></div><div class="lbl" style="padding-left:1px;bottom:0">土围村</div></div>

</div>
</body>
</html>
